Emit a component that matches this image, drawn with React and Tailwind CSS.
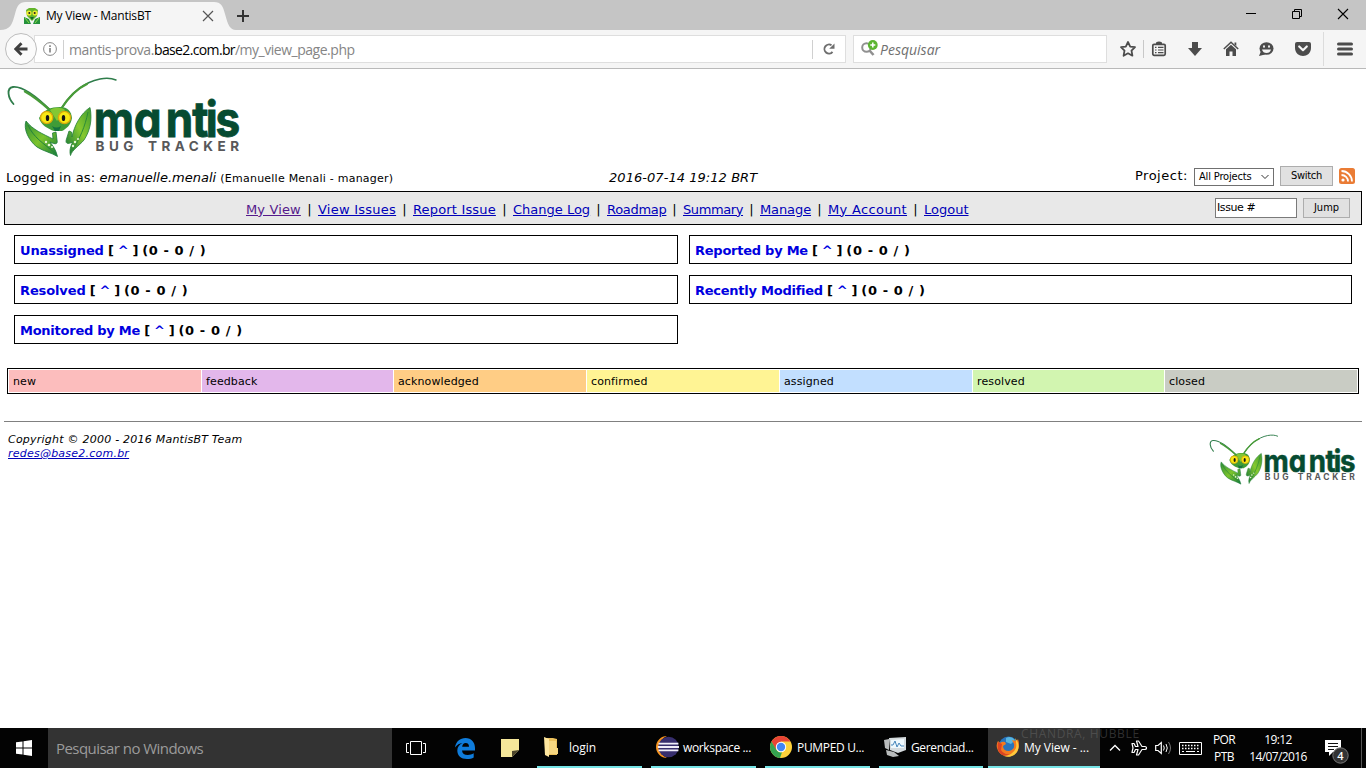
import React from "react";

function MantisLogo({ className }) {
  return (
    <svg viewBox="0 0 236 86" className={className}>
      <defs>
        <linearGradient id="leaf" x1="0" y1="0" x2="1" y2="1">
          <stop offset="0" stopColor="#2f8f38" />
          <stop offset="0.5" stopColor="#7cc32c" />
          <stop offset="1" stopColor="#127a3c" />
        </linearGradient>
        <linearGradient id="leafR" x1="1" y1="0" x2="0" y2="1">
          <stop offset="0" stopColor="#3f9a2f" />
          <stop offset="0.45" stopColor="#86c92f" />
          <stop offset="1" stopColor="#0d7038" />
        </linearGradient>
      </defs>
      <g fill="none" strokeLinecap="round">
        <path d="M8.500 29C3 23 1 13 8 12C18 11 33 23 46 36" stroke="#2f7d4b" strokeWidth="1.800" />
        <path d="M20 16.500C30 22 38 29 46 36" stroke="#489b38" strokeWidth="2.400" />
        <path d="M56 34C66 18 80 7 95 4C102 2.700 107 3.300 111 5" stroke="#2f7d4b" strokeWidth="1.500" />
        <path d="M56 34C63 23 71 14 82 9" stroke="#489b38" strokeWidth="2.200" />
      </g>
      <path d="M21 46C18 54 24 66 32 72C38 76 47 78 52.500 81.500C51 75 48 71 45 67C51 70 53 69 52 65L51 57L47.500 58L48 64C38 59 28 55 21 46Z" fill="url(#leaf)" stroke="#1b7a3a" strokeWidth="0.8" />
      <path d="M23 50C28 62 38 68 50 78" fill="none" stroke="#24823c" strokeWidth="1" />
      <path d="M85 32.500C87.500 45 85 56 79 65C74 71 67 75 65.500 80.500C64 75 66 71 67.500 67C62 70 60 68 61.500 64L64 56L66.500 57L67 62C69 51 76 38 85 32.500Z" fill="url(#leafR)" stroke="#247f37" strokeWidth="0.8" />
      <path d="M83 37C80 52 75 63 67 76" fill="none" stroke="#2c8b38" strokeWidth="1" />
      <g fill="#e8f7d5"><circle cx="41" cy="67" r="1.200" /><circle cx="44" cy="70" r="1.300" /><circle cx="47" cy="72" r="1.100" /><circle cx="70" cy="67" r="1.200" /><circle cx="68" cy="71" r="1.200" /><circle cx="73" cy="64" r="1" /></g>
      <path d="M34 43C38 35 46 32 55 32C63 32 66 36 67 43C66 50 61 54 57 56H49C43 54 36 50 34 43Z" fill="#3f9c37" />
      <path d="M45 35C49 32 57 32 60 35L52 46Z" fill="#83c733" />
      <circle cx="41.700" cy="42.500" r="6.100" fill="#f8e813" stroke="#d9a90b" strokeWidth="1.300" />
      <circle cx="59.500" cy="42.500" r="6.100" fill="#f8e813" stroke="#d9a90b" strokeWidth="1.300" />
      <ellipse cx="42.500" cy="43" rx="1.700" ry="3.100" fill="#151515" />
      <ellipse cx="58.500" cy="43" rx="1.700" ry="3.100" fill="#151515" />
      <path d="M47 51Q51.500 54 56 51L54 56H50Z" fill="#157341" />
      <text transform="scale(0.9 1)" x="98.500 143 178.500 208 223 234" y="62.500" fill="#064b31" stroke="#064b31" strokeWidth="0.9" fontSize="49" fontWeight="700" fontFamily="Inter, sans-serif" style={{ fontFeatureSettings: '"cv11"' }}>mantis</text>
      <text x="90.500" y="75.500" textLength="38" fill="#58585a" fontSize="13.500" fontWeight="700" fontFamily="Inter, sans-serif">BUG</text>
      <text x="143" y="75.500" textLength="91" fill="#58585a" fontSize="13.500" fontWeight="700" fontFamily="Inter, sans-serif">TRACKER</text>
    </svg>
  );
}

function Favicon() {
  return (
    <svg viewBox="0 0 16 16" className="h-4 w-4">
      <path d="M0 9L5 11L7 16H0ZM16 9L11 11L9 16H16Z" fill="#25913c" />
      <path d="M1 10L5 15M15 10L11 15" stroke="#8edb45" strokeWidth="1" />
      <path d="M2 2L5 0H11L14 2L13 8L8 13L3 8Z" fill="#63b52b" />
      <circle cx="5" cy="5" r="2.600" fill="#edec2e" /><circle cx="11" cy="5" r="2.600" fill="#edec2e" />
      <circle cx="5.300" cy="5" r="1" fill="#222" /><circle cx="10.700" cy="5" r="1" fill="#222" />
      <path d="M6 9H10L8 12Z" fill="#15672c" />
    </svg>
  );
}

function TabStrip() {
  return (
    <div className="flex h-[30px] shrink-0 bg-[#c5c5c5]">
      <div className="relative w-[236px]">
        <svg viewBox="0 0 236 30" className="absolute inset-0 h-[30px] w-[236px]">
          <path d="M0 30C10 30 12 25 15 14C17 6 19 2 26 2H214C221 2 223 6 225 14C228 25 230 30 236 30Z" fill="#f5f5f5" />
        </svg>
        <div className="relative flex h-[30px] items-center pl-6 pt-[2px]">
          <Favicon />
          <span className="ml-1.5 w-[155px] whitespace-nowrap text-[12px] tracking-[-0.2px] text-black">My View - MantisBT</span>
          <svg viewBox="0 0 12 12" className="ml-[1px] h-3 w-3"><path d="M1 1L11 11M11 1L1 11" stroke="#555" strokeWidth="1.200" /></svg>
        </div>
      </div>
      <svg viewBox="0 0 14 14" className="mt-[9px] h-[14px] w-[14px]"><path d="M7 1V13M1 7H13" stroke="#333" strokeWidth="2" /></svg>
      <div className="ml-auto flex h-[30px] items-start pt-[8px]">
        <svg viewBox="0 0 12 12" className="mr-[34px] h-3 w-3"><path d="M1 5.500H11" stroke="#000" /></svg>
        <svg viewBox="0 0 12 12" className="mr-[34px] h-3 w-3"><path d="M1.500 3.500H8.500V10.500H1.500ZM3.500 3.500V1.500H10.500V8.500H8.500" stroke="#000" fill="none" /></svg>
        <svg viewBox="0 0 12 12" className="mr-[17px] h-3 w-3"><path d="M1 1L11 11M11 1L1 11" stroke="#000" strokeWidth="1.100" /></svg>
      </div>
    </div>
  );
}

function Toolbar() {
  return (
    <div className="flex h-[39px] shrink-0 items-center border-b border-[#b9b9b9] bg-[#f5f5f5]">
      <div className="z-10 ml-[5px] flex h-8 w-8 items-center justify-center rounded-full border border-[#bdbdbd] bg-[#fbfbfb]">
        <svg viewBox="0 0 14 14" className="h-[14px] w-[14px]"><path d="M13.500 7H2.500M7.500 1.200L1.700 7L7.500 12.800" stroke="#404040" strokeWidth="2.900" fill="none" /></svg>
      </div>
      <div className="-ml-[3px] flex h-[28px] w-[812px] items-center border border-[#dedede] bg-white">
        <svg viewBox="0 0 14 14" className="ml-[8px] h-[14px] w-[14px]"><circle cx="7" cy="7" r="6.400" fill="none" stroke="#888" /><path d="M7 6V10.500M7 3.300V4.900" stroke="#777" strokeWidth="1.500" /></svg>
        <div className="ml-[6px] h-[19px] w-px bg-[#d0d0d0]" />
        <span className="ml-[5px] whitespace-nowrap pt-px text-[14px] tracking-[-0.4px] text-[#858585]">mantis-prova.<span className="tracking-[-0.64px] text-black">base2.com.br</span><span className="tracking-[-0.48px]">/my_view_page.php</span></span>
        <div className="ml-auto h-[19px] w-px bg-[#d0d0d0]" />
        <svg viewBox="0 0 14 14" className="ml-[9px] mr-[9px] h-[14px] w-[14px]"><path d="M10.500 9.800A4.500 4.500 0 1 1 9.500 3.300" stroke="#6e6e6e" strokeWidth="1.900" fill="none" /><path d="M12.500 1.500V6.800H7.200Z" fill="#6e6e6e" /></svg>
      </div>
      <div className="ml-[7px] flex h-[28px] w-[254px] items-center border border-[#dedede] bg-white">
        <svg viewBox="0 0 18 18" className="ml-[6px] h-[18px] w-[18px]">
          <circle cx="6.500" cy="7.500" r="4.300" stroke="#909090" strokeWidth="2" fill="none" /><path d="M9.500 10.500L13.500 15" stroke="#909090" strokeWidth="2.600" />
          <circle cx="12.800" cy="5" r="4.900" fill="#5cb531" /><path d="M12.800 2.500V7.500M10.300 5H15.300" stroke="#fff" strokeWidth="1.500" />
        </svg>
        <span className="ml-[2px] pt-px text-[14px] italic text-[#707070]">Pesquisar</span>
      </div>
      <div className="flex h-full flex-1 items-center text-[#4c4c4c]">
        <svg viewBox="0 0 18 18" className="ml-[12px] h-[18px] w-[18px]"><path d="M9 2L11.200 6.600L16 7.200L12.500 10.700L13.400 15.700L9 13.300L4.600 15.700L5.500 10.700L2 7.200L6.800 6.600Z" fill="none" stroke="currentColor" strokeWidth="1.800" strokeLinejoin="round" /></svg>
        <div className="ml-[6px] h-[18px] w-px bg-[#c8c8c8]" />
        <svg viewBox="0 0 16 16" className="ml-[7px] h-4 w-4"><path d="M5 3V1.500Q8 -.5 11 1.500V3" fill="currentColor" /><rect x="1.800" y="3.300" width="12.400" height="11" rx="1.300" fill="none" stroke="currentColor" strokeWidth="1.700" /><path d="M4 6.300H5.500M7 6.300H12.500M4 9H5.500M7 9H12.500M4 11.700H5.500M7 11.700H12.500" stroke="currentColor" strokeWidth="1.200" /></svg>
        <svg viewBox="0 0 16 16" className="ml-[20px] h-4 w-4"><path d="M5 1H11V7H15L8 15L1 7H5Z" fill="currentColor" /></svg>
        <svg viewBox="0 0 16 16" className="ml-[20px] h-4 w-4"><path d="M.8 8L8 1.300L15.200 8" fill="none" stroke="currentColor" strokeWidth="1.500" /><path d="M3 8.300L8 3.700L13 8.300V15H9.500V10.500H6.500V15H3ZM11.500 1.500H13.300V5L11.500 3.500Z" fill="currentColor" /></svg>
        <svg viewBox="0 0 16 16" className="ml-[19px] h-4 w-4"><ellipse cx="8.500" cy="7.500" rx="7" ry="6.300" fill="currentColor" /><path d="M3 10L1 15L7 13.500Z" fill="currentColor" /><ellipse cx="6" cy="5.500" rx="1" ry="1.300" fill="#f5f5f5" /><ellipse cx="11" cy="5.500" rx="1" ry="1.300" fill="#f5f5f5" /><path d="M4 8.500H13Q12 12 8.500 12T4 8.500Z" fill="#f5f5f5" /></svg>
        <svg viewBox="0 0 16 16" className="ml-[21px] h-4 w-4"><path d="M2 1H14Q16 1 16 3V7C16 12 12 15 8 15S0 12 0 7V3Q0 1 2 1Z" fill="currentColor" /><path d="M4.200 5.500L8 9.200L11.800 5.500" stroke="#f5f5f5" strokeWidth="2.200" fill="none" strokeLinecap="round" strokeLinejoin="round" /></svg>
        <div className="ml-[12px] h-[34px] w-px bg-[#dcdcdc]" />
        <svg viewBox="0 0 16 14" className="ml-[13px] h-[14px] w-4"><path d="M1.500 2H14.500M1.500 7H14.500M1.500 12H14.500" stroke="currentColor" strokeWidth="3" strokeLinecap="round" /></svg>
      </div>
    </div>
  );
}

const nav = [
  ["My View", "w-[55px] tracking-[0.14px] text-[#551a8b]"],
  ["View Issues", "w-[78px] tracking-[0.25px] text-[#0000b8]"],
  ["Report Issue", "w-[83px] tracking-[0.17px] text-[#0000b8]"],
  ["Change Log", "w-[77px] text-[#0000b8]"],
  ["Roadmap", "w-[59px] tracking-[-0.3px] text-[#0000b8]"],
  ["Summary", "w-[60px] tracking-[-0.4px] text-[#0000b8]"],
  ["Manage", "w-[51px] tracking-[-0.1px] text-[#0000b8]"],
  ["My Account", "w-[79px] tracking-[0.35px] text-[#0000b8]"],
  ["Logout", "w-[45px] text-[#0000b8]"],
];

const boxes = [
  ["Unassigned", "tracking-[-0.15px]"],
  ["Reported by Me", "tracking-[-0.25px]"],
  ["Resolved", "tracking-[-0.12px]"],
  ["Recently Modified", "tracking-[-0.25px]"],
  ["Monitored by Me", "tracking-[-0.25px]"],
];

const statuses = [
  ["new", "bg-[#fcbdbd] w-[192px]"],
  ["feedback", "bg-[#e3b7eb] w-[191px]"],
  ["acknowledged", "bg-[#ffcd85] w-[192px]"],
  ["confirmed", "bg-[#fff494] w-[192px]"],
  ["assigned", "bg-[#c2dfff] w-[192px]"],
  ["resolved", "bg-[#d2f5b0] w-[191px]"],
  ["closed", "bg-[#c9ccc4] w-[192px]"],
];

function Page() {
  return (
    <main className="flex flex-1 flex-col bg-white font-['DejaVu_Sans',sans-serif] text-[13px] text-black">
      <MantisLogo className="ml-[5px] mt-[6px] h-[86px] w-[236px]" />
      <div className="flex h-[30px] items-center pl-[6px] pr-[11px] pt-px">
        <div className="w-[603px] whitespace-nowrap pt-[2px]"><span className="tracking-[0.18px]">Logged in as: </span><i>emanuelle.menali</i> <span className="text-[11px] tracking-[0.23px]">(Emanuelle Menali - manager)</span></div>
        <i className="w-[526px] whitespace-nowrap pt-[2px] tracking-[0.05px]">2016-07-14 19:12 BRT</i>
        <span className="mb-px w-[59px] whitespace-nowrap tracking-[0.5px]">Project:</span>
        <div className="flex h-[18px] w-[80px] items-center justify-between border border-[#707070] pl-[4px] pr-[4px] pt-px font-['DejaVu_Sans_Condensed','DejaVu_Sans',sans-serif] text-[11px] tracking-[-0.15px]">
          <span className="whitespace-nowrap">All Projects</span>
          <svg viewBox="0 0 8 6" className="h-[6px] w-2 shrink-0"><path d="M.5 1L4 4.500L7.500 1" stroke="#333" fill="none" /></svg>
        </div>
        <div className="mb-px ml-[6px] flex h-5 w-[53px] items-center justify-center border border-[#adadad] bg-[#e1e1e1] pt-px font-['DejaVu_Sans_Condensed','DejaVu_Sans',sans-serif] text-[11px] tracking-[-0.3px]">Switch</div>
        <svg viewBox="0 0 16 16" className="mb-px ml-[6px] h-4 w-4"><rect width="16" height="16" rx="2.500" fill="#ea7c35" /><circle cx="4" cy="12" r="1.600" fill="#fff" /><path d="M2.500 7A6.500 6.500 0 0 1 9 13.500M2.500 3A10.500 10.500 0 0 1 13 13.500" stroke="#fff" strokeWidth="1.800" fill="none" /></svg>
      </div>
      <div className="ml-[4px] flex h-[34px] w-[1358px] items-center border border-black bg-[#e8e8e8] pl-[241px]">
        <nav className="flex w-[969px] items-center pt-[3px]">
          {nav.map(([label, cls], i) => (
            <React.Fragment key={label}>
              {i > 0 && <span className="w-[17px] text-center text-black">|</span>}
              <a className={"whitespace-nowrap underline underline-offset-[1px] " + cls}>{label}</a>
            </React.Fragment>
          ))}
        </nav>
        <div className="flex h-5 w-[82px] items-center border border-[#7a7a7a] bg-white pl-px pt-px text-[11px] tracking-[-0.4px]">Issue #</div>
        <div className="ml-[6px] flex h-5 w-[47px] items-center justify-center border border-[#adadad] bg-[#e1e1e1] pt-px font-['DejaVu_Sans_Condensed','DejaVu_Sans',sans-serif] text-[11px]">Jump</div>
      </div>
      <div className="ml-[14px] mt-[10px] grid grid-cols-[664px_663px] gap-x-[11px] gap-y-[11px]">
        {boxes.map(([label, cls]) => (
          <div key={label} className="flex h-[29px] items-center whitespace-pre border border-black pl-[5px] pt-[2px] font-bold">
            <span className={"text-[#0000e0] " + cls}>{label}</span>
            <span className="tracking-[-0.35px]"> [ <span className="text-[#0000e0]">^</span> ] </span>
            <span className="tracking-[0.6px]">(0 - 0 / )</span>
          </div>
        ))}
      </div>
      <div className="ml-[7px] mt-[24px] flex h-[26px] w-[1352px] gap-px border border-black p-px text-[11px]">
        {statuses.map(([label, cls]) => (
          <div key={label} className={"flex shrink-0 items-center pl-1 pt-[2px] tracking-[0.12px] " + cls}>{label}</div>
        ))}
      </div>
      <div className="ml-[4px] mt-[27px] h-px w-[1358px] bg-[#808080]" />
      <footer className="flex justify-between pl-2 pr-[10px] pt-[10px] text-[11px] leading-[14px]">
        <div className="pt-px italic tracking-[0.23px]">
          <div>Copyright © 2000 - 2016 MantisBT Team</div>
          <a className="text-[#0000b8] underline">redes@base2.com.br</a>
        </div>
        <MantisLogo className="mt-px h-[54px] w-[148px]" />
      </footer>
    </main>
  );
}

function Task({ label, icon, className }) {
  return (
    <div className={"flex h-10 items-center whitespace-nowrap border-b-2 border-[#76e4e6] text-[12px] text-white " + className}>
      {icon}
      <span className="ml-[4px] pt-[2px]">{label}</span>
    </div>
  );
}

function Taskbar() {
  return (
    <div className="flex h-10 shrink-0 items-center bg-[#030303] text-white">
      <svg viewBox="0 0 16 16" className="mx-4 h-4 w-4"><path d="M0 2.300L6.500 1.400V7.500H0ZM7.500 1.200L16 0V7.500H7.500ZM0 8.500H6.500V14.600L0 13.700ZM7.500 8.500H16V16L7.500 14.800Z" fill="#fff" /></svg>
      <div className="flex h-10 w-[344px] items-center bg-[#333] pl-2 text-[15px] tracking-[-0.55px] text-[#9b9b9b]">Pesquisar no Windows</div>
      <svg viewBox="0 0 20 14" className="ml-[14px] h-[14px] w-5"><path d="M4.500 .5H15.500V13.500H4.500ZM3 2.500H.5V11.500H3M17 2.500H19.500V11.500H17" fill="none" stroke="#fff" /></svg>
      <svg viewBox="0 0 20 21" className="ml-[29px] h-[21px] w-5"><path d="M0 9.500C1 3.500 5 0 10.500 0C16.500 0 20 4.500 20 10V12.500H7C7.200 15.500 9.500 17 12.800 17C15 17 17 16.400 18.700 15.300V19.500C17 20.500 14.700 21 12 21C6 21 2.300 17.500 2.300 12.500C2.300 9 4.500 6.300 7.500 5C4.500 5.300 2 6.700 0 9.500ZM7.200 8.700H14C14 6.500 13 5 10.700 5C8.700 5 7.400 6.500 7.200 8.700Z" fill="#0f7cdb" fillRule="evenodd" /></svg>
      <svg viewBox="0 0 18 18" className="ml-[26px] h-[18px] w-[18px]"><path d="M0 0H18V11L11 18H0Z" fill="#f5e79a" /><path d="M18 11L11 18V12Z" fill="#4c452a" /></svg>
      <Task label="login" className="ml-[18px] w-[105px] pl-[6px]" icon={<svg viewBox="0 0 22 22" className="h-[22px] w-[22px]"><path d="M2 2H10L14 3V19H2Z" fill="#ecc15d" /><path d="M1 1L6 3V21L2 19Z" fill="#ffe8a0" /><path d="M6 5H13V12H15V18H6Z" fill="#f7d781" /></svg>} />
      <Task label="workspace ..." className="ml-[9px] w-[105px] pl-[4px] tracking-[-0.35px]" icon={<svg viewBox="0 0 24 22" className="h-[22px] w-6"><path d="M12 0A11 11 0 0 0 12 22A12 12 0 0 1 12 0Z" fill="#f7941e" /><circle cx="13.500" cy="11" r="10.300" fill="#372e6d" /><path d="M3.500 7.700H23.400M2.800 11H24M3.500 14.300H23.400" stroke="#f1effa" strokeWidth="1.800" /></svg>} />
      <Task label="PUMPED U..." className="ml-[9px] w-[105px] pl-[5px] tracking-[-0.33px]" icon={<svg viewBox="0 0 22 22" className="mr-px h-[22px] w-[22px]"><circle cx="11" cy="11" r="11" fill="#fdd13a" /><path d="M1.500 5.500A11 11 0 0 1 20.500 5.500H11L6 14Z" fill="#e84435" /><path d="M1.500 5.500L6.300 13.700A5.500 5.500 0 0 0 12 16.300L10 22A11 11 0 0 1 1.500 5.500Z" fill="#34a350" /><circle cx="11" cy="11" r="5.200" fill="#fff" /><circle cx="11" cy="11" r="4.200" fill="#4285f4" /></svg>} />
      <Task label="Gerenciad..." className="ml-[9px] w-[104px] pl-[5px] tracking-[-0.35px]" icon={<svg viewBox="0 0 23 22" className="h-[22px] w-[23px]"><path d="M0 4L5 3V14L1 12ZM2 14L10 16L15 20L9 21L3 19Z" fill="#b9bcbd" /><path d="M5 2L22 1V14L14 17L6 14Z" fill="#d4dadd" /><path d="M7 4L20 3V12L7 12Z" fill="#eff8fc" /><path d="M7 9H9L11 5L13 11L15 7L17 10H20" fill="none" stroke="#4585bb" /></svg>} />
      <Task label="My View - ..." className="ml-[5px] w-[112px] bg-[#333] pl-[8px] tracking-[-0.05px]" icon={<svg viewBox="0 0 24 24" className="h-6 w-6"><circle cx="12.500" cy="11.500" r="10" fill="#2874bd" /><path d="M10 3Q15 0 19 5L15 9L10 7Z" fill="#57b5df" /><path d="M2 6L4 8Q6 6 9 7L10 9L7 11Q7 16 13 16Q19 15 18 9L16 5Q21 7 22 4Q24 10 22 15A11 10.500 0 0 1 1 13Q0 9 2 6Z" fill="#f47a20" /><path d="M19 3Q25 10 21 17A10.500 10 0 0 1 8 21Q17 20 20 13Q21 8 19 3Z" fill="#ffc93a" /><path d="M2 7L6 9L5 15Q8 20 14 19Q7 23 3 17Q1 13 2 7Z" fill="#db4422" /></svg>} />
      <svg viewBox="0 0 12 8" className="ml-[9px] h-2 w-3"><path d="M1 6.500L6 1.500L11 6.500" fill="none" stroke="#fff" strokeWidth="1.300" /></svg>
      <svg viewBox="0 0 16 16" className="ml-[10px] h-4 w-4"><path d="M1 3.500H3L4.500 6.500H7L5.500 1H7.500L11 6.500H14Q15.500 6.700 15.500 8T14 9.500H11L7.500 15H5.500L7 9.500H4.500L3 12.500H1L2 8Z" fill="none" stroke="#fff" strokeWidth="1.200" strokeLinejoin="round" /></svg>
      <svg viewBox="0 0 17 14" className="ml-[8px] h-[14px] w-[17px]"><path d="M.7 4.500H3L6.300 1.500V12.500L3 9.500H.7Z" fill="none" stroke="#fff" strokeWidth="1.200" /><path d="M8.500 4.500Q10 7 8.500 9.500M11 3Q13.500 7 11 11" fill="none" stroke="#fff" /><path d="M13.500 1Q17.500 7 13.500 13" fill="none" stroke="#777" /></svg>
      <svg viewBox="0 0 23 13" className="ml-[7px] h-[13px] w-[23px]"><path d="M.5 .5H22.500V12.500H.5Z" fill="none" stroke="#fff" /><path d="M3 3.500H20M3 6.500H20" stroke="#fff" strokeWidth="1.500" strokeDasharray="1.500 1.500" /><path d="M3 9.500H5M7 9.500H16M18 9.500H20" stroke="#fff" /></svg>
      <div className="ml-[9px] w-[26px] text-center text-[12px] leading-[17px] tracking-[-0.6px]"><div>POR</div><div>PTB</div></div>
      <div className="ml-[10px] w-[62px] whitespace-nowrap text-center text-[12px] leading-[17px] tracking-[-0.6px]"><div>19:12</div><div>14/07/2016</div></div>
      <svg viewBox="0 0 26 26" className="ml-[15px] mt-[8px] h-[26px] w-[26px]"><path d="M1 1H17V13H9L5 17V13H1Z" fill="#fff" /><path d="M4 4.500H14M4 7.500H14M4 10.500H10" stroke="#111" /><circle cx="16.500" cy="16.500" r="7.700" fill="#333" stroke="#777" /><text x="16.500" y="20.500" textAnchor="middle" fontSize="11" fontWeight="600" fill="#fff">4</text></svg>
      <div className="ml-auto mr-[4px] h-10 w-px bg-[#555]" />
    </div>
  );
}

export default function App() {
  return (
    <div className="relative flex h-[768px] w-[1366px] flex-col overflow-hidden bg-white font-['Open_Sans','Noto_Sans',sans-serif]">
      <TabStrip />
      <Toolbar />
      <Page />
      <Taskbar />
      <div className="absolute left-[1021px] top-[725px] whitespace-nowrap text-[12px] leading-[17px] tracking-[0.65px] text-[#777]/40">CHANDRA, HUBBLE</div>
    </div>
  );
}
